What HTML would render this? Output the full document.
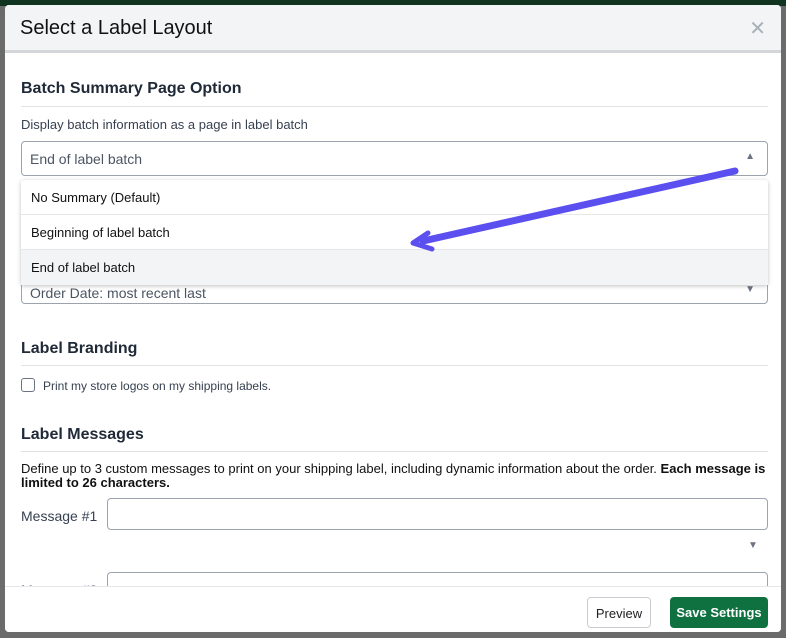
<!DOCTYPE html>
<html><head><style>
*{box-sizing:border-box;margin:0;padding:0}
body{width:786px;height:638px;overflow:hidden;background:#6b6b6b;font-family:"Liberation Sans",sans-serif;position:relative;color:#1f2937}
.topbar{position:absolute;left:0;top:0;width:786px;height:6px;background:#10341f}
.modal{position:absolute;left:5px;top:5px;width:776px;height:627px;background:#fff;border-radius:4px;overflow:hidden}
.hdr{height:48px;background:#f3f4f6;border-bottom:3px solid #d4d6da;position:relative}
.hdr h1{position:absolute;left:15px;top:12px;font-size:20px;font-weight:normal;color:#111}
.x{position:absolute;right:15px;top:11px;font-size:20px;color:#a8b0b8}
.a{position:absolute}
h2{position:absolute;font-size:16px;font-weight:bold;color:#1f2937}
.hr{position:absolute;left:16px;width:747px;height:1px;background:#e0e2e6}
.t{position:absolute;font-size:13px;color:#374151}
.sel{position:absolute;left:16px;width:747px;height:35px;border:1px solid #9ca3af;border-radius:4px;font-size:14px;color:#4b5563;padding:9px 8px}
.dd{position:absolute;left:16px;top:175px;width:747px;height:105px;background:#fff;box-shadow:0 1px 4px rgba(0,0,0,.25);border-radius:3px}
.dd div{height:35px;border-bottom:1px solid #e5e7eb;font-size:13px;padding:10px 10px;color:#111}
.ftr{position:absolute;left:0;top:581px;width:776px;height:46px;background:#fff;border-top:1px solid #e5e7eb}
.btn{position:absolute;top:10px;height:31px;border-radius:4px;font-size:13px;padding:8px 0;text-align:center}
</style></head><body>
<div class="topbar"></div>
<div class="modal">
 <div class="hdr"><h1>Select a Label Layout</h1><div class="x">✕</div></div>
 <h2 style="left:16px;top:75px">Batch Summary Page Option</h2>
 <div class="hr" style="top:101px"></div>
 <div class="t" style="left:16px;top:112px">Display batch information as a page in label batch</div>
 <div class="sel" style="top:136px">End of label batch<span style="position:absolute;right:12px;top:9px;font-size:10px;color:#6b7280">▲</span></div>
 <div class="sel" style="top:264px;padding-top:15px">Order Date: most recent last<span style="position:absolute;right:12px;top:14px;font-size:10px;color:#6b7280">▼</span></div>
 <div class="dd"><div>No Summary (Default)</div><div>Beginning of label batch</div><div style="background:#f3f4f6;border:none">End of label batch</div></div>
 <svg class="a" style="left:0;top:0" width="776" height="300"><path d="M730 166 L418 236" stroke="#5b4ff0" stroke-width="7" stroke-linecap="round" fill="none"/><path d="M423 228 L408 238 L427 244" stroke="#5b4ff0" stroke-width="5" stroke-linecap="round" stroke-linejoin="round" fill="none"/></svg>
 <h2 style="left:16px;top:335px">Label Branding</h2>
 <div class="hr" style="top:360px"></div>
 <div class="a" style="left:16px;top:373px;width:14px;height:14px;border:1.5px solid #6b7280;border-radius:3px"></div>
 <div class="t" style="left:38px;top:374px;font-size:12px">Print my store logos on my shipping labels.</div>
 <h2 style="left:16px;top:421px">Label Messages</h2>
 <div class="hr" style="top:446px"></div>
 <div class="t" style="left:16px;top:457px;width:750px;line-height:14px;color:#111">Define up to 3 custom messages to print on your shipping label, including dynamic information about the order. <b>Each message is limited to 26 characters.</b></div>
 <div class="t" style="left:16px;top:503px;font-size:14px">Message #1</div>
 <div class="a" style="left:102px;top:493px;width:661px;height:32px;border:1px solid #9ca3af;border-radius:4px"></div>
 <div class="a" style="left:743px;top:535px;font-size:10px;color:#6b7280">▼</div>
 <div class="t" style="left:16px;top:577px;font-size:14px">Message #2</div>
 <div class="a" style="left:102px;top:567px;width:661px;height:32px;border:1px solid #9ca3af;border-radius:4px"></div>
 <div class="ftr">
  <div class="btn" style="left:582px;width:64px;border:1px solid #c9cdd2;color:#222">Preview</div>
  <div class="btn" style="left:665px;width:98px;background:#0f7040;color:#fff;font-weight:bold">Save Settings</div>
 </div>
</div>
</body></html>
